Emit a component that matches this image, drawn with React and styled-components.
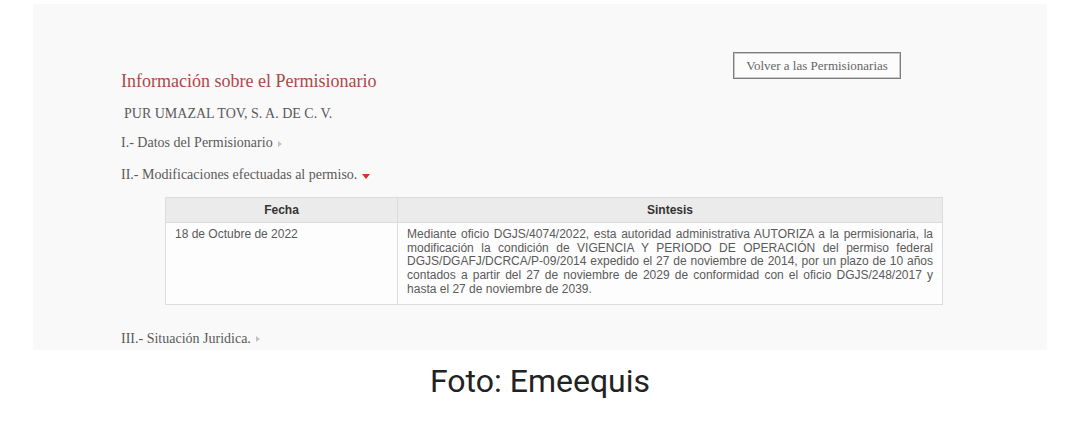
import React from "react"
import styled, { createGlobalStyle } from "styled-components"

const GlobalStyle = createGlobalStyle`
  html, body {
    margin: 0;
    padding: 0;
    background: #ffffff;
  }
  body {
    width: 1080px;
    height: 441px;
    overflow: hidden;
  }
`

const Page = styled.div`
  display: flex;
  flex-direction: column;
  align-items: center;
  padding-top: 4px;
`

const Shot = styled.section`
  box-sizing: border-box;
  width: 1014px;
  height: 346px;
  background: #f9f9f9;
  padding: 48px 146px 0 88px;
  overflow: hidden;
  font-family: "Liberation Serif", "Times New Roman", serif;
  color: #5a5a5a;
`

const TopBar = styled.div`
  display: flex;
  justify-content: space-between;
  align-items: flex-start;
`

const Title = styled.h2`
  margin: 18px 0 0;
  font-size: 18px;
  font-weight: normal;
  line-height: 22px;
  color: #ad4848;
`

const BackButton = styled.button`
  box-sizing: border-box;
  width: 168px;
  height: 27px;
  padding: 0;
  background: #fcfcfc;
  border: 1px solid #7d7d7d;
  box-shadow: inset 0 0 0 1px #c9c9c9;
  font-family: "Liberation Serif", "Times New Roman", serif;
  font-size: 13px;
  color: #666;
`

const Line = styled.div`
  margin-top: ${(p) => p.$gap}px;
  padding-left: ${(p) => p.$indent || 0}px;
  font-size: 14px;
  line-height: 18px;
  color: #5a5a5a;
  display: flex;
  align-items: center;
  gap: 5px;
`

const Arrow = styled.span`
  display: inline-block;
  width: 0;
  height: 0;
  ${(p) =>
    p.$open
      ? `
    border-left: 4px solid transparent;
    border-right: 4px solid transparent;
    border-top: 5px solid #d9302c;
    margin-top: 2px;
  `
      : `
    border-top: 3.5px solid transparent;
    border-bottom: 3.5px solid transparent;
    border-left: 4px solid #c4c4c4;
    margin-top: 1px;
  `}
`

const Table = styled.table`
  margin: 13px 0 0 44px;
  width: 778px;
  border-collapse: collapse;
  font-family: "Liberation Sans", Arial, sans-serif;
  font-size: 12px;
  background: #fdfdfd;
`

const Th = styled.th`
  height: 24px;
  padding: 0;
  background: #ebebeb;
  border: 1px solid #dcdcdc;
  color: #333;
  font-weight: bold;
  text-align: center;
  width: ${(p) => p.$w}px;
`

const Td = styled.td`
  box-sizing: border-box;
  vertical-align: top;
  padding: 5px 9px 7px 9px;
  border: 1px solid #dcdcdc;
  color: #5a5a5a;
  line-height: 13.7px;
  text-align: ${(p) => (p.$justify ? "justify" : "left")};
`

const Caption = styled.p`
  margin: 12px 0 0;
  font-family: Roboto, "Noto Sans", sans-serif;
  font-size: 32px;
  line-height: 38px;
  color: #222;
`

export default function App() {
  return (
    <>
      <GlobalStyle />
      <Page>
        <Shot>
          <TopBar>
            <Title>Información sobre el Permisionario</Title>
            <BackButton>Volver a las Permisionarias</BackButton>
          </TopBar>
          <Line $gap={13} $indent={3}>PUR UMAZAL TOV, S. A. DE C. V.</Line>
          <Line $gap={11}>
            I.- Datos del Permisionario <Arrow />
          </Line>
          <Line $gap={14}>
            II.- Modificaciones efectuadas al permiso. <Arrow $open />
          </Line>
          <Table>
            <thead>
              <tr>
                <Th $w={232}>Fecha</Th>
                <Th $w={546}>Sintesis</Th>
              </tr>
            </thead>
            <tbody>
              <tr>
                <Td>18 de Octubre de 2022</Td>
                <Td $justify>
                  Mediante oficio DGJS/4074/2022, esta autoridad administrativa
                  AUTORIZA a la permisionaria, la modificación la condición de
                  VIGENCIA Y PERIODO DE OPERACIÓN del permiso federal
                  DGJS/DGAFJ/DCRCA/P-09/2014 expedido el 27 de noviembre de 2014,
                  por un plazo de 10 años contados a partir del 27 de noviembre de
                  2029 de conformidad con el oficio DGJS/248/2017 y hasta el 27 de
                  noviembre de 2039.
                </Td>
              </tr>
            </tbody>
          </Table>
          <Line $gap={25}>
            III.- Situación Juridica. <Arrow />
          </Line>
        </Shot>
        <Caption>Foto: Emeequis</Caption>
      </Page>
    </>
  )
}
